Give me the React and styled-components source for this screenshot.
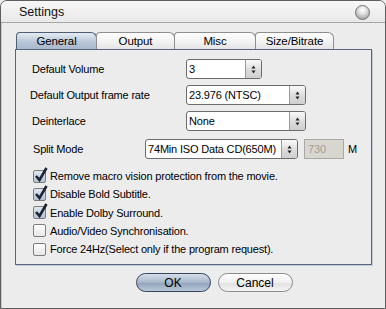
import styled, { createGlobalStyle } from "styled-components";

const Global = createGlobalStyle`
  html, body { margin: 0; padding: 0; background: #ececec; }
  body { font-family: "Liberation Sans", Arial, sans-serif; color: #000; }
  * { box-sizing: border-box; }
`;

const Window = styled.div`
  width: 386px;
  height: 309px;
  border: 1px solid #5e5e5e;
  border-radius: 7px 7px 0 0;
  background: #ececec;
  display: flex;
  flex-direction: column;
  overflow: hidden;
  box-shadow: inset 1px 1px 0 #c8c8c8;
`;

const TitleBar = styled.div`
  height: 22px;
  flex: none;
  display: flex;
  align-items: center;
  justify-content: space-between;
  padding: 0 15px 0 18px;
  background: linear-gradient(#f7f7f7, #e9e9e9);
  border-bottom: 1px solid #a6a6a6;
  font-size: 12.5px;
  color: #111;
`;

const CloseDot = styled.span`
  width: 15px;
  height: 15px;
  border-radius: 50%;
  border: 1px solid #707070;
  background: radial-gradient(circle at 50% 30%, #ffffff 0, #e2e2e2 35%, #a9a9a9 80%, #c9c9c9 100%);
  margin-top: 1px;
`;

const Body = styled.div`
  flex: 1;
  padding: 9px 14px 0 14px;
  display: flex;
  flex-direction: column;
`;

const Tabs = styled.div`
  display: flex;
  height: 17px;
  padding-left: 1px;
`;

const Tab = styled.div`
  width: ${(p) => p.$w}px;
  height: 17px;
  display: flex;
  align-items: center;
  justify-content: center;
  font-size: 11.5px;
  letter-spacing: -0.1px;
  border: 1px solid ${(p) => (p.$active ? "#4d5e75" : "#8e8e8e")};
  border-bottom: none;
  border-radius: 4px 6px 0 0;
  background: ${(p) =>
    p.$active
      ? "linear-gradient(#e4ebf3, #b7c5d6 60%, #a9b9cc)"
      : "linear-gradient(#ffffff, #f1f1f1 60%, #e4e4e4)"};
  margin-right: -1px;
`;

const Panel = styled.div`
  height: 216px;
  width: 357px;
  border: 1px solid #56667e;
  box-shadow: 1px 1px 0 #c6ccd6;
  padding-top: 9px;
  display: flex;
  flex-direction: column;
  font-size: 11px;
  letter-spacing: -0.18px;
`;

const FieldRow = styled.div`
  display: flex;
  align-items: center;
  height: 20px;
  margin-top: ${(p) => p.$mt || 0}px;
`;

const Label = styled.div`
  width: ${(p) => p.$w}px;
  padding-left: ${(p) => p.$pl}px;
  flex: none;
`;

const Select = styled.div`
  width: ${(p) => p.$w}px;
  height: 20px;
  display: flex;
  border: 1px solid #6c6c6c;
  border-radius: 3px;
  background: #fff;
  overflow: hidden;
`;

const SelectValue = styled.div`
  flex: 1;
  display: flex;
  align-items: center;
  padding-left: 2px;
  white-space: nowrap;
`;

const SpinButton = styled.div`
  width: 16px;
  flex: none;
  display: flex;
  align-items: center;
  justify-content: center;
  border-left: 1px solid #9a9a9a;
  background: linear-gradient(#fafafa, #dcdcdc 55%, #cfcfcf);
`;

const Disabled = styled.div`
  width: 40px;
  height: 20px;
  margin-left: 6px;
  border: 1px solid #a8a8a8;
  background: #d9d6cf;
  color: #a3a09a;
  display: flex;
  align-items: center;
  padding-left: 3px;
`;

const Unit = styled.span`
  margin-left: 4px;
`;

const Checks = styled.div`
  margin-top: 8px;
  display: flex;
  flex-direction: column;
  padding-left: 17px;
`;

const CheckRow = styled.div`
  display: flex;
  align-items: center;
  height: 18.25px;
`;

const Box = styled.span`
  position: relative;
  width: 13px;
  height: 13px;
  flex: none;
  margin-right: 4px;
  border: 1px solid #7d7d7d;
  border-radius: 2px;
  background: ${(p) =>
    p.$on
      ? "linear-gradient(#dfe7f0, #b3c2d4)"
      : "linear-gradient(#ffffff, #e6e6e6)"};
`;

const Tick = styled.svg`
  position: absolute;
  left: 0px;
  top: -4px;
`;

const Footer = styled.div`
  display: flex;
  justify-content: center;
  gap: 7px;
  margin-top: 8px;
  padding-left: 42px;
`;

const PillButton = styled.div`
  width: ${(p) => p.$w}px;
  height: 19px;
  border-radius: 10px;
  display: flex;
  align-items: center;
  justify-content: center;
  font-size: 12px;
  border: 1px solid ${(p) => (p.$primary ? "#35465d" : "#8b8b8b")};
  background: ${(p) =>
    p.$primary
      ? "linear-gradient(#d5dee9, #a7b7cb 50%, #93a6be 55%, #b9c8d9)"
      : "linear-gradient(#ffffff, #f0f0f0 50%, #e2e2e2 55%, #f5f5f5)"};
`;

const Arrows = () => (
  <svg width="7" height="11" viewBox="0 0 7 11">
    <path d="M3.5 1.5 L5.5 4.5 L1.5 4.5 Z" fill="#222" />
    <path d="M3.5 9.5 L5.5 6.5 L1.5 6.5 Z" fill="#222" />
  </svg>
);

const Combo = ({ w, value }) => (
  <Select $w={w}>
    <SelectValue>{value}</SelectValue>
    <SpinButton>
      <Arrows />
    </SpinButton>
  </Select>
);

const Check = ({ on, children }) => (
  <CheckRow>
    <Box $on={on}>
      {on && (
        <Tick width="14" height="16" viewBox="0 0 14 16">
          <path d="M2 9 L5.5 13 L12.5 1" stroke="#1c2433" strokeWidth="2.6" fill="none" />
        </Tick>
      )}
    </Box>
    {children}
  </CheckRow>
);

export default function App() {
  return (
    <>
      <Global />
      <Window>
        <TitleBar>
          <span>Settings</span>
          <CloseDot />
        </TitleBar>
        <Body>
          <Tabs>
            <Tab $w={81} $active>General</Tab>
            <Tab $w={79}>Output</Tab>
            <Tab $w={82}>Misc</Tab>
            <Tab $w={79}>Size/Bitrate</Tab>
          </Tabs>
          <Panel>
            <FieldRow>
              <Label $w={170} $pl={16}>Default Volume</Label>
              <Combo w={76} value="3" />
            </FieldRow>
            <FieldRow $mt={6}>
              <Label $w={170} $pl={14}>Default Output frame rate</Label>
              <Combo w={120} value="23.976 (NTSC)" />
            </FieldRow>
            <FieldRow $mt={6}>
              <Label $w={170} $pl={16}>Deinterlace</Label>
              <Combo w={120} value="None" />
            </FieldRow>
            <FieldRow $mt={8}>
              <Label $w={129} $pl={17}>Split Mode</Label>
              <Combo w={153} value="74Min ISO Data CD(650M)" />
              <Disabled>730</Disabled>
              <Unit>M</Unit>
            </FieldRow>
            <Checks>
              <Check on>Remove macro vision protection from the movie.</Check>
              <Check on>Disable Bold Subtitle.</Check>
              <Check on>Enable Dolby Surround.</Check>
              <Check>Audio/Video Synchronisation.</Check>
              <Check>Force 24Hz(Select only if the program request).</Check>
            </Checks>
          </Panel>
          <Footer>
            <PillButton $w={75} $primary>OK</PillButton>
            <PillButton $w={75}>Cancel</PillButton>
          </Footer>
        </Body>
      </Window>
    </>
  );
}
